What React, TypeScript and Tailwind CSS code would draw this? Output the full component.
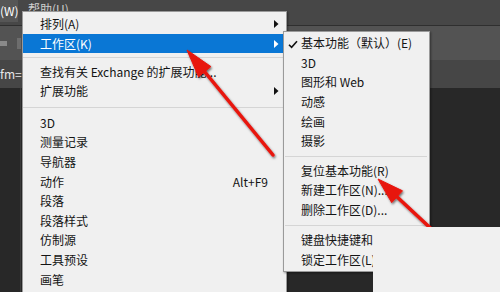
import React from "react";

const FONT = { fontFamily: '"Noto Sans CJK SC", "Noto Sans", sans-serif' };

function Tri({ white }: { white?: boolean }) {
  return (
    <svg width="5" height="8" viewBox="0 0 5 8" className="shrink-0">
      <polygon points="0,0 4.5,4 0,8" fill={white ? "#ffffff" : "#111111"} />
    </svg>
  );
}

function Row({
  label,
  shortcut,
  sub,
  active,
  check,
}: {
  label: string;
  shortcut?: string;
  sub?: boolean;
  active?: boolean;
  check?: boolean;
}) {
  return (
    <div
      className={`relative flex h-[19.6px] items-center pl-[17px] pr-[7px] ${
        active ? "bg-[#0a77d5] text-white" : "text-[#141414]"
      }`}
    >
      {check && (
        <svg width="10" height="9" viewBox="0 0 10 9" className="absolute left-[4px] top-[6px]">
          <path d="M1 4.8 L3.6 7.4 L9 1.2" stroke="#111" strokeWidth="1.6" fill="none" />
        </svg>
      )}
      <span className="flex-1 whitespace-nowrap overflow-hidden">{label}</span>
      {shortcut && <span className="mr-[11px] whitespace-nowrap">{shortcut}</span>}
      {sub && <Tri white={active} />}
    </div>
  );
}

function Sep({ h }: { h: string }) {
  return (
    <div className={`flex items-center ${h}`}>
      <div className="h-px w-full bg-[#d5d5d5]" />
    </div>
  );
}

export default function App() {
  return (
    <div className="relative h-[292px] w-[500px] overflow-hidden bg-[#282828] text-[12px]" style={FONT}>
      {/* background bands */}
      <div className="flex h-[25px] items-start bg-[#474747]">
        <div className="flex h-[22px] w-[18px] items-center bg-[#565656] text-[12px] text-white">(W)</div>
        <div className="ml-[10px] h-[11px] overflow-hidden pt-[3px] text-[12px] leading-[12px] text-[#cfcfcf]">
          帮助(U)
        </div>
      </div>
      <div className="h-px bg-[#2f2f2f]" />
      <div className="flex h-[34px] items-center gap-[10px] bg-[#535353]">
        <div className="h-[5px] w-[7px] bg-[#8a8a8a]" />
        <div className="h-[11px] w-[4px] bg-[#6d6d6d]" />
      </div>
      <div className="flex h-[28px] items-center bg-[#464646] text-[12px] text-[#e8e8e8]">fm=</div>
      <div className="flex h-[204px]">
        <div className="w-[20px] bg-[#282828]" />
        <div className="w-px bg-[#3a3a3a]" />
        <div className="flex-1 bg-[#282828]" />
      </div>

      {/* main menu */}
      <div className="absolute left-[22px] top-[11px] h-[300px] w-[265px] border border-[#9a9a9a] bg-[#f0f0f0] pt-[2.2px] shadow-[1px_1px_2px_rgba(0,0,0,0.4)]">
        <Row label="排列(A)" sub />
        <Row label="工作区(K)" sub active />
        <Sep h="h-[8.5px]" />
        <Row label="查找有关 Exchange 的扩展功能..." />
        <Row label="扩展功能" sub />
        <Sep h="h-[12px]" />
        <Row label="3D" />
        <Row label="测量记录" />
        <Row label="导航器" />
        <Row label="动作" shortcut="Alt+F9" />
        <Row label="段落" />
        <Row label="段落样式" />
        <Row label="仿制源" />
        <Row label="工具预设" />
        <Row label="画笔" />
      </div>

      {/* submenu */}
      <div className="absolute left-[283px] top-[31px] h-[241px] w-[147px] border border-[#9a9a9a] bg-[#f0f0f0] pt-[1.5px] shadow-[1px_1px_2px_rgba(0,0,0,0.4)]">
        <Row label="基本功能（默认）(E)" check />
        <Row label="3D" />
        <Row label="图形和 Web" />
        <Row label="动感" />
        <Row label="绘画" />
        <Row label="摄影" />
        <div className="ml-px mr-[2px]">
          <Sep h="h-[10px]" />
        </div>
        <Row label="复位基本功能(R)" />
        <Row label="新建工作区(N)..." />
        <Row label="删除工作区(D)..." />
        <div className="ml-px mr-[2px]">
          <Sep h="h-[10.5px]" />
        </div>
        <Row label="键盘快捷键和菜单(K)..." />
        <Row label="锁定工作区(L)" />
      </div>

      {/* red arrows */}
      <svg className="pointer-events-none absolute left-0 top-0" width="500" height="292" viewBox="0 0 500 292">
        <defs>
          <filter id="sh" x="-20%" y="-20%" width="140%" height="140%">
            <feDropShadow dx="1" dy="1.5" stdDeviation="1.3" floodColor="#000" floodOpacity="0.55" />
          </filter>
        </defs>
        <g filter="url(#sh)" fill="#e8140e" stroke="#e8140e">
          <line x1="202" y1="68.5" x2="273" y2="155" strokeWidth="3.5" strokeLinecap="round" />
          <polygon points="187,50 198.5,76.8 204.7,71.7 210.9,66.6" strokeWidth="1" strokeLinejoin="round" />
          <line x1="395" y1="195" x2="440" y2="237" strokeWidth="3.5" strokeLinecap="round" />
          <polygon points="378,179 391.7,202.6 397.1,196.7 402.5,190.8" strokeWidth="1" strokeLinejoin="round" />
        </g>
      </svg>

      {/* overlay box bottom right */}
      <div className="absolute bottom-0 left-[373px] right-0 top-[227px] bg-[#f0f0f0]" />
    </div>
  );
}
